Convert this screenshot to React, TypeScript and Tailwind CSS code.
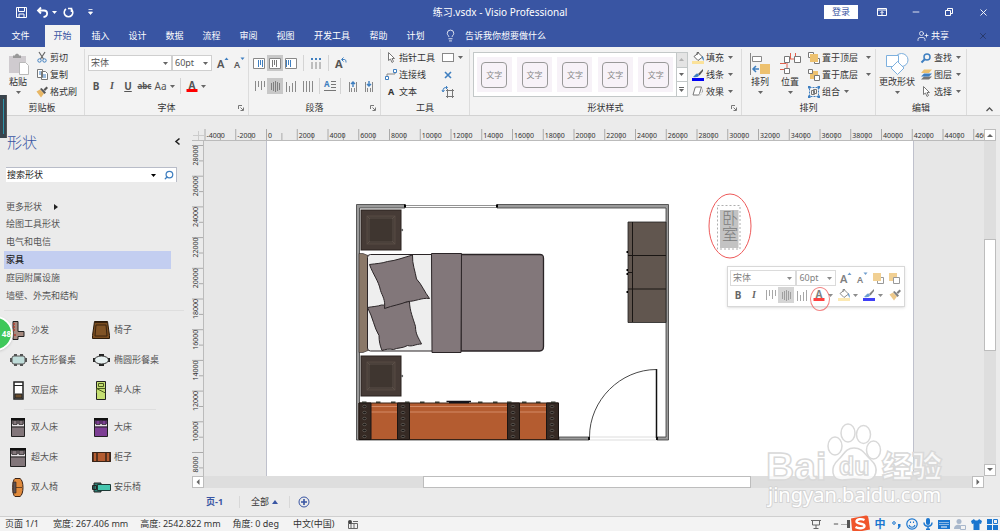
import React, { useState } from "react";
import clsx from "clsx";
import { Lightbulb, Minus, Search, UserPlus, X } from "lucide-react";

const TABS = ["插入", "设计", "数据", "流程", "审阅", "视图"];

const CATEGORIES = [
  "绘图工具形状",
  "电气和电信",
  "家具",
  "庭园附属设施",
  "墙壁、外壳和结构",
];

// --- Small helpers ---

const Svg = ({ w = 12, h = 12, box = "", children, className = "" }: any) => (
  <svg
    width={w}
    height={h}
    viewBox={box || `0 0 ${w} ${h}`}
    fill="none"
    className={clsx("shrink-0 overflow-visible", className)}
    aria-hidden="true"
  >
    {children}
  </svg>
);

const Caret = ({ className = "" }: { className?: string }) => (
  <Svg w={5} h={3} className={clsx("text-[#666]", className)}>
    <path d="M0 0h5L2.5 3z" fill="currentColor" />
  </Svg>
);

const Sep = () => <span className="mx-1 h-4 w-px shrink-0 bg-[#d4d4d4]" />;

const Group = ({ label, className, children, launcher }: any) => (
  <section
    className={clsx("relative flex shrink-0 flex-col border-r border-[#dcdcdc]", className)}
  >
    <div className="flex h-[51px] items-stretch">{children}</div>
    <h2 className="h-[15px] text-center leading-[16px]">{label}</h2>
    {launcher && (
      <button aria-label={label} className="absolute right-1 bottom-1">
        <Svg w={6} h={6}>
          <path d="M.5 4V.5H4M2.5 2.5 5 5M5.5 2.5v3h-3" stroke="#777" />
        </Svg>
      </button>
    )}
  </section>
);

const Tool = ({ icon, label, caret, wide }: any) => (
  <button className="flex h-[17px] items-center gap-[2px] whitespace-nowrap hover:bg-[#dde3f3]">
    <span className="flex w-3 justify-center">{icon}</span>
    {label}
    {caret && <Caret className={wide ? "ml-[6px]" : "ml-[2px]"} />}
  </button>
);

const BigTool = ({ icon, label, className }: any) => (
  <button
    className={clsx(
      "flex shrink-0 flex-col items-center whitespace-nowrap pt-[3px] hover:bg-[#dde3f3]",
      className
    )}
  >
    <span className="flex h-6 items-center">{icon}</span>
    <span className="leading-[12px]">{label}</span>
    <Caret className="mt-[3px]" />
  </button>
);

const IconBtn = ({ active, className = "w-4", label, children }: any) => (
  <button
    aria-label={label}
    className={clsx(
      "flex h-4 shrink-0 items-center justify-center gap-[3px]",
      className,
      active && "bg-[#c8c8c8]"
    )}
  >
    {children}
  </button>
);

const Picker = ({ label, value, className }: any) => (
  <label
    className={clsx(
      "relative flex h-4 items-center border border-[#cfcfcf] bg-white text-[#555]",
      className
    )}
  >
    <select
      aria-label={label}
      className="w-full appearance-none bg-transparent pl-[2px] text-[9px] outline-none"
    >
      <option>{value}</option>
    </select>
    <Caret className="pointer-events-none absolute right-[3px]" />
  </label>
);

// --- Glyphs shared by the ribbon and the floating toolbar ---

const FontUp = () => (
  <Svg w={13} h={12}>
    <text x="0" y="11" fontSize="11" fill="#555" fontWeight="600">A</text>
    <path d="M7.5 3 9.5.5l2 2.5z" fill="#3f7fc0" />
  </Svg>
);

const FontDown = () => (
  <Svg w={13} h={12}>
    <text x="1" y="11" fontSize="9" fill="#555" fontWeight="600">A</text>
    <path d="M7.5.5h4L9.5 3z" fill="#3f7fc0" />
  </Svg>
);

const FontColor = () => (
  <Svg w={12} h={12}>
    <text x="2.5" y="8.5" fontSize="10" fill="#555" fontWeight="700">A</text>
    <path d="M.5 9h11v3H.5z" fill="#f00" />
  </Svg>
);

const Bars = ({ kind = "mid" }: { kind?: string }) => (
  <Svg w={11} h={11}>
    {kind === "top" && <path d="M1.5 0v10M4.5 0v6M7.5 0v9M10.5 0v6" stroke="#8a8a8a" />}
    {kind === "mid" && <path d="M1.5 2v7M3.5 1v9M5.5 0v11M7.5 1v9M9.5 2v7" stroke="#808080" />}
    {kind === "bottom" && <path d="M.5 1v10M3.5 5v6M6.5 2v9M9.5 0v11" stroke="#8a8a8a" />}
    {kind === "full" && <path d="M1.5 0v11M4.5 0v11M7.5 0v11M10.5 0v11" stroke="#8a8a8a" />}
  </Svg>
);

const BarsBox = ({ at = 0 }: { at?: number }) => (
  <Svg w={12} h={11}>
    <path d="M.5.5h11v10H.5z" fill="#fff" stroke="#888" />
    <path
      d={`M${at + 1.5} 2v7M${at + 3.5} 2v5M${at + 5.5} 2v7`}
      stroke={at === 2 ? "#777" : "#3f7fc0"}
    />
  </Svg>
);

const Bucket = () => (
  <Svg w={12} h={12}>
    <path d="M2 4.5 6.5 1l4 4L6 8.5z" fill="#fff" stroke="#666" />
    <path d="M5 3V.5h2" stroke="#666" />
    <path d="M10 4c2 1 2 3 1.5 5L10 6z" fill="#3f7fc0" />
    <path d="M0 9h12v3H0z" fill="#fbe29a" />
  </Svg>
);

const LinePen = () => (
  <Svg w={12} h={12}>
    <path d="M11 0 6 5l1.5 1.5L11 2z" fill="#555" />
    <path d="M5.5 4.5c-2 0-2.5 2-4.5 3.5 3 .5 6 0 6-2z" fill="#3f7fc0" />
    <path d="M0 9h12v3H0z" fill="#0000f5" />
  </Svg>
);

const Brush = () => (
  <Svg w={12} h={12}>
    <path d="m.5 5.5 3.500-2 4 4L5 11.500z" fill="#e8b765" />
    <path d="m4 3 1.500-1 4.500 4.500-1.500 1.500z" fill="#555" />
    <path d="m7.500 3.500 3-3 1.500 1.500-3 3z" fill="#555" />
  </Svg>
);

const Pointer = () => (
  <Svg w={8} h={11}>
    <path d="M1.5.5v8l2-1.5L5 10.500l1.500-1L5 6.500h2.500z" fill="#fff" stroke="#777" />
  </Svg>
);

const Front = () => (
  <Svg w={12} h={12}>
    <path d="M.5.5h5v5h-5zM6.5 6.5h5v5h-5z" fill="#fff" stroke="#777" />
    <path d="M2 2h8v8H2z" fill="#edc16f" />
  </Svg>
);

const Back = () => (
  <Svg w={12} h={12}>
    <path d="M2 2h8v8H2z" fill="#edc16f" />
    <path d="M.5.5h4v4h-4zM6.5 6.5h5v5h-5z" fill="#fff" stroke="#777" />
  </Svg>
);

// --- Title bar and tabs ---

const TitleBar = () => (
  <header className="grid h-6 grid-cols-[1fr_auto_1fr] items-center bg-[#3955a3] text-white">
    <div className="flex items-center pl-4">
      <IconBtn label="保存" className="w-[11px]">
        <Svg w={11} h={11}>
          <path d="M.5.5h10v10H.5zM2.5.5v4h6v-4M3 10.500V7h5v3.500" stroke="#fff" />
        </Svg>
      </IconBtn>
      <IconBtn label="撤消" className="ml-2 w-6">
        <Svg w={12} h={11}>
          <path d="M4 .5 1 3.500l3 3M1.500 3.500H7c4 0 4.500 6-.5 6.500" stroke="#fff" strokeWidth="1.800" />
        </Svg>
        <Caret className="text-white" />
      </IconBtn>
      <IconBtn label="重复" className="ml-[3px] w-3">
        <Svg w={11} h={11}>
          <path d="M3 2a4.300 4.300 0 1 0 5 0M8.500 5V1.500H5" stroke="#fff" strokeWidth="1.600" />
        </Svg>
      </IconBtn>
      <IconBtn label="自定义" className="ml-2 w-4">
        <Svg w={5} h={6}>
          <path d="M.5.5h4M.5 3h4L2.500 5.500z" stroke="#fff" strokeWidth=".8" fill="#fff" />
        </Svg>
      </IconBtn>
    </div>
    <h1 className="text-[10px]">练习.vsdx - Visio Professional</h1>
    <div className="flex items-center justify-end">
      <button className="h-[14px] w-[34px] bg-white leading-[14px] text-[#3955a3]">登录</button>
      <IconBtn label="功能区" className="ml-[7px] w-[34px]">
        <Svg w={10} h={8}>
          <path d="M.5.5h9v7h-9zM.5 2h9M5 7V3.500M3.500 5 5 3.500 6.500 5" stroke="#fff" />
        </Svg>
      </IconBtn>
      <IconBtn label="最小化" className="w-[33px]">
        <Minus size={10} />
      </IconBtn>
      <IconBtn label="还原" className="w-[34px]">
        <Svg w={8} h={8}>
          <path d="M.5 2.500h5v5h-5zM2.500 2V.5h5v5H6" stroke="#fff" />
        </Svg>
      </IconBtn>
      <IconBtn label="关闭" className="w-[34px]">
        <X size={11} />
      </IconBtn>
    </div>
  </header>
);

const TabBar = () => (
  <nav className="flex h-[23px] items-stretch whitespace-nowrap bg-[#3955a3] text-white">
    <button className="w-[45px] pr-1">文件</button>
    <button className="mt-px mr-[2px] w-[35px] bg-[#f3f3f3] text-[#3955a3]">开始</button>
    {TABS.map((t) => (
      <button key={t} className="w-[37px]">
        {t}
      </button>
    ))}
    <button className="w-[56px]">开发工具</button>
    <button className="w-[37px]">帮助</button>
    <button className="w-[37px]">计划</button>
    <button className="ml-[10px] flex items-center gap-[8px]">
      <Lightbulb size={13} strokeWidth={1.5} />
      告诉我你想要做什么
    </button>
    <button className="ml-auto flex items-center gap-[2px]">
      <UserPlus size={12} strokeWidth={1.5} />
      共享
    </button>
    <button aria-label="关闭" className="ml-[17px] flex w-[34px] items-center justify-center text-[#27355f]">
      <X size={10} />
    </button>
  </nav>
);

// --- Ribbon ---

const Ribbon = () => (
  <div className="flex h-[69px] overflow-hidden border-b border-[#d2d2d2] bg-[#f3f3f3] pt-[2px]">
    <Group label="剪贴板" className="w-[85px]">
      <BigTool
        label="粘贴"
        className="mx-[5px] w-[26px]"
        icon={
          <Svg w={21} h={22}>
            <path d="M1 3h17v17H1z" fill="#cfcbcf" />
            <path d="M5 2.500h2C7 0 11 0 11 2.500h2V5H5z" fill="#999" />
            <path d="M11.500 9.500h6l3 3v9h-9z" fill="#fff" stroke="#b9b9b9" />
          </Svg>
        }
      />
      <div className="flex flex-col">
        <Tool
          label="剪切"
          icon={
            <Svg w={10} h={11}>
              <path d="m2 0 4.500 7M8 0 3.500 7" stroke="#666" strokeWidth="1.200" />
              <circle cx="2.500" cy="8.500" r="1.700" stroke="#3f7fc0" />
              <circle cx="7.500" cy="8.500" r="1.700" stroke="#3f7fc0" />
            </Svg>
          }
        />
        <Tool
          label="复制"
          icon={
            <Svg w={11} h={11}>
              <path d="M.5.5h5v8h-5zM4.500 2.500h4l2 2v6h-6z" fill="#fff" stroke="#777" />
              <path d="M2 3h2M2 5h2M6 6h3M6 8h3" stroke="#3f7fc0" />
            </Svg>
          }
        />
        <Tool label="格式刷" icon={<Brush />} />
      </div>
    </Group>

    <Group label="字体" className="w-[164px]" launcher>
      <div className="flex flex-col justify-center gap-[7px] pl-[3px]">
        <div className="flex items-center">
          <Picker label="字体" value="宋体" className="w-[84px]" />
          <Picker label="字号" value="60pt" className="w-[40px]" />
          <IconBtn label="增大字号" className="ml-[3px] w-4"><FontUp /></IconBtn>
          <IconBtn label="减小字号"><FontDown /></IconBtn>
        </div>
        <div className="flex items-center text-[10px] text-[#555]">
          <IconBtn><b>B</b></IconBtn>
          <IconBtn><i className="font-['Liberation_Serif',serif] font-bold">I</i></IconBtn>
          <IconBtn><b className="underline">U</b></IconBtn>
          <IconBtn className="w-[17px]"><s className="text-[8px] font-bold">abc</s></IconBtn>
          <IconBtn className="w-[23px]">Aa<Caret /></IconBtn>
          <Sep />
          <IconBtn label="字体颜色" className="w-[22px]"><FontColor /><Caret /></IconBtn>
        </div>
      </div>
    </Group>

    <Group label="段落" className="w-[132px]" launcher>
      <div className="flex flex-col justify-center gap-[7px] pl-[2px]">
        <div className="flex items-center">
          <IconBtn label="右对齐"><BarsBox at={4} /></IconBtn>
          <IconBtn label="居中" active><BarsBox at={2} /></IconBtn>
          <IconBtn label="左对齐"><BarsBox at={0} /></IconBtn>
          <Sep />
          <IconBtn label="项目符号">
            <Svg w={12} h={11}>
              <path d="M2 0v2M6 0v2M10 0v2" stroke="#3f7fc0" strokeWidth="2" />
              <path d="M2 4v7M6 4v7M10 4v7" stroke="#888" />
            </Svg>
          </IconBtn>
          <Sep />
          <IconBtn label="旋转文本">
            <Svg w={12} h={12}>
              <text x="0" y="11" fontSize="11" fontWeight="700" fill="#555">A</text>
              <path d="M7 2.500h2.500c1 0 1.500 1 1.500 3M8.500.5l-2 2 2 2" stroke="#3f7fc0" />
            </Svg>
          </IconBtn>
        </div>
        <div className="flex items-center">
          <IconBtn label="顶端对齐"><Bars kind="top" /></IconBtn>
          <IconBtn label="中部对齐" active><Bars /></IconBtn>
          <IconBtn label="底端对齐"><Bars kind="bottom" /></IconBtn>
          <IconBtn label="两端对齐"><Bars kind="full" /></IconBtn>
          <Sep />
          <IconBtn label="文字方向" className="w-3">
            <Svg w={12} h={12}>
              <text x="0" y="7" fontSize="8" fill="#3f7fc0" fontWeight="700">A</text>
              <path d="M7 1.500h5M7 4.500h5M7 7.500h5M0 10.500h12" stroke="#777" />
            </Svg>
          </IconBtn>
          <Sep />
          {["M6 7V2M4 4 6 2l2 2", "M6 1v5M4 4l2 2 2-2"].map((d) => (
            <IconBtn key={d} label="间距">
              <Svg w={10} h={12} box="1 0 10 12">
                <path d={d} stroke="#3f7fc0" strokeWidth="1.400" />
                <path d="M2.500 2v10M9.500 2v10M4.500 8v4M7.500 8v4" stroke="#888" />
              </Svg>
            </IconBtn>
          ))}
        </div>
      </div>
    </Group>

    <Group label="工具" className="w-[89px]">
      <div className="flex flex-col pl-1">
        <Tool label="指针工具" icon={<Pointer />} />
        <Tool
          label="连接线"
          icon={
            <Svg w={12} h={11}>
              <path d="M2 8V5h8V3" stroke="#888" />
              <path d="M.5 7.500h3v3h-3zM8.500.5h3v3h-3z" fill="#fff" stroke="#3f7fc0" />
            </Svg>
          }
        />
        <Tool label="文本" icon={<b>A</b>} />
      </div>
      <div className="ml-[7px] flex flex-col">
        <button aria-label="矩形" className="flex h-[17px] items-center gap-1">
          <span className="h-[9px] w-3 border border-[#888] bg-white" />
          <Caret />
        </button>
        <button aria-label="连接点" className="flex h-[17px] items-center pl-[2px]">
          <Svg w={8} h={8}><path d="m1 1 6 6M7 1 1 7" stroke="#3f7fc0" strokeWidth="1.600" /></Svg>
        </button>
        <button aria-label="文本块" className="flex h-[17px] items-center">
          <Svg w={12} h={12}>
            <path d="M5.500 4.500h5v6h-5zM4 4.500h8M4 10.500h8M5.500 3v9M10.500 3v9" stroke="#777" />
            <path d="M1 5c0-3 1-3.500 4-3.500M4 0l1.500 1.500L4 3M0 4l1 2 1.500-2" stroke="#3f7fc0" />
          </Svg>
        </button>
      </div>
    </Group>

    <Group label="形状样式" className="min-w-0 flex-1" launcher>
      <div className="my-[3px] ml-[3px] flex flex-1 border border-[#c3c8c8] bg-white">
        <div className="flex flex-1 items-center justify-around overflow-hidden">
          {[0, 1, 2, 3, 4].map((n) => (
            <button
              key={n}
              className="flex h-[35px] w-[35px] items-center justify-center bg-[#f7f2f8]"
            >
              <span className="flex size-[26px] items-center justify-center rounded-[4px] border border-[#999] text-[8px] text-[#888]">
                文字
              </span>
            </button>
          ))}
        </div>
        <div className="flex w-[11px] flex-col divide-y divide-[#c3c8c8] border-l border-[#c3c8c8] *:flex *:flex-1 *:items-center *:justify-center">
          <button aria-label="上一行" className="bg-[#e4e4e4]"><Caret className="rotate-180 opacity-40" /></button>
          <button aria-label="下一行"><Caret /></button>
          <button aria-label="其他" className="flex-col gap-px">
            <span className="h-px w-[5px] bg-[#666]" />
            <Caret />
          </button>
        </div>
      </div>
      <div className="mr-[8px] ml-1 flex flex-col">
        <Tool label="填充" icon={<Bucket />} caret />
        <Tool label="线条" icon={<LinePen />} caret />
        <Tool
          label="效果"
          caret
          icon={
            <Svg w={11} h={11}>
              <path d="M3 9.500h5l3-4V2L9 9z" fill="#999" />
              <path d="M3.500 1h6l-2 6.500c0 1-1 1.500-2 1.500H1L3 2z" fill="#fff" stroke="#777" />
            </Svg>
          }
        />
      </div>
    </Group>

    <Group label="排列" className="w-[134px]">
      <BigTool
        label="排列"
        className="ml-[3px] w-[30px]"
        icon={
          <Svg w={20} h={22}>
            <path d="M.5 0v22" stroke="#888" />
            <path d="M2.500 3.500h9v5h-9z" fill="#fff" stroke="#888" />
            <path d="M10 11h10v10H10z" fill="#edc16f" />
            <path d="M9 16H3M6 13l-3 3 3 3" stroke="#3f7fc0" strokeWidth="1.500" />
          </Svg>
        }
      />
      <BigTool
        label="位置"
        className="w-[30px]"
        icon={
          <Svg w={21} h={22}>
            <path d="M10.500 0v6M15.500 0v6M0 10.500h6M0 16.500h4M7 6v10M10 6h5" stroke="#e2604c" />
            <path d="M4.500 3.500h5v6h-5zM14.500 3.500h6v6h-6zM4.500 15.500h5v5h-5z" fill="#fff" stroke="#777" />
          </Svg>
        }
      />
      <div className="ml-[3px] flex flex-col">
        <Tool label="置于顶层" icon={<Front />} caret wide />
        <Tool label="置于底层" icon={<Back />} caret wide />
        <Tool
          label="组合"
          caret
          icon={
            <Svg w={12} h={12}>
              <path d="M1.500 1.500h9v9h-9z" stroke="#3f7fc0" strokeDasharray="2 1" />
              <path d="M0 0h2.500v2.500H0zM9.500 0H12v2.500H9.500zM0 9.500h2.500V12H0zM9.500 9.500H12V12H9.500z" fill="#3f7fc0" />
              <path d="M3.500 4.500h3v4h-3zM5.500 3.500h3v4h-3z" stroke="#777" />
            </Svg>
          }
        />
      </div>
    </Group>

    <Group label="编辑" className="w-[91px]">
      <BigTool
        label="更改形状"
        className="w-[42px]"
        icon={
          <Svg w={23} h={23}>
            <circle cx="15.500" cy="7" r="6.500" fill="#fff" stroke="#7db0de" />
            <path d="M.5 2.500h12v11H.5z" fill="#fff" stroke="#7db0de" />
            <path d="m11.500 8.500 6.500 6.500-6.500 6.500L5 15z" fill="#fff" stroke="#7db0de" />
          </Svg>
        }
      />
      <div className="ml-[2px] flex flex-col">
        <Tool
          label="查找"
          caret
          icon={
            <Svg w={10} h={10}>
              <circle cx="6" cy="4" r="3" stroke="#3f7fc0" strokeWidth="1.500" />
              <path d="M4 6 .5 9.500" stroke="#3f7fc0" strokeWidth="2" />
            </Svg>
          }
        />
        <Tool
          label="图层"
          caret
          icon={
            <Svg w={11} h={11}>
              <path d="M3 7.500h8l-3 3H0z" fill="#777" />
              <path d="M3 4.500h8l-3 3H0z" fill="#3f7fc0" />
              <path d="M3 .5h8L8 4H0z" fill="#edc16f" />
            </Svg>
          }
        />
        <Tool label="选择" icon={<Pointer />} caret />
      </div>
    </Group>

    <div className="flex w-[33px] shrink-0 items-end justify-end pr-[7px] pb-[3px]">
      <button aria-label="折叠功能区">
        <Svg w={7} h={5}><path d="M.5 4 3.500 1l3 3" stroke="#555" strokeWidth="1.300" /></Svg>
      </button>
    </div>
  </div>
);

// --- Stencil thumbnails ---

const DoubleBed = ({ fill = "#82767a", w = 14 }: any) => (
  <Svg w={w} h={19} box={`0 0 ${w} 19`}>
    <path d={`M.5.5h${w - 1}v18H.5z`} fill={fill} stroke="#222" />
    <path d={`M0 0h${w}v2.500H0z`} fill="#111" />
    <path d={`M1 6h${w - 2}v2.500H1z`} fill="#e8e4e6" />
    <path
      d={`M2 2.500h${w / 2 - 3}v4H2zM${w / 2 + 1} 2.500h${w / 2 - 3}v4h-${w / 2 - 3}z`}
      fill={fill}
      stroke="#222"
      strokeWidth=".7"
    />
    <path d={`M0 9h${w}`} stroke="#222" />
  </Svg>
);

const STENCILS: { label: string; icon: React.ReactNode }[][] = [
  [
    {
      label: "沙发",
      icon: (
        <Svg w={14} h={19}>
          <path d="M2 .5h5v10h6v5H7v3H2z" fill="#a5897e" stroke="#222" />
          <path d="M2 3h2M2 6h2M2 9h2M3 14h2" stroke="#b53c2c" strokeWidth="1.500" />
        </Svg>
      ),
    },
    {
      label: "椅子",
      icon: (
        <Svg w={18} h={18}>
          <path d="M2.500.5h13l2 14v3H.5v-3z" fill="#7a4d20" stroke="#2a1a0a" />
          <path d="M4 4h10l1 11H3zM3 1.500h12" fill="#805325" stroke="#3a240f" />
        </Svg>
      ),
    },
    {
      label: "长方形餐桌",
      icon: (
        <Svg w={17} h={12}>
          <path d="M4 1h3M10 1h3M4 11h3M10 11h3M1 4v4M16 4v4" stroke="#555" strokeWidth="2" />
          <rect x="2" y="2" width="13" height="8" rx="2" fill="#bfdcd9" stroke="#555" />
        </Svg>
      ),
    },
    {
      label: "椭圆形餐桌",
      icon: (
        <Svg w={17} h={12}>
          <path d="M6 1h5M6 11h5M1 4v4M16 4v4" stroke="#222" strokeWidth="2" />
          <ellipse cx="8.500" cy="6" rx="7" ry="4" fill="#e6f0f0" stroke="#333" />
        </Svg>
      ),
    },
    {
      label: "双层床",
      icon: (
        <Svg w={11} h={19}>
          <path d="M1 1h9v17H1z" fill="#fff" stroke="#222" strokeWidth="1.500" />
          <path d="M1 4.500h9" stroke="#222" />
          <path d="M2 13h7v4H2z" fill="#6b4e2e" stroke="#222" />
        </Svg>
      ),
    },
    {
      label: "单人床",
      icon: (
        <Svg w={10} h={19}>
          <path d="M.5.5h9v18h-9z" fill="#c5df72" stroke="#222" />
          <path d="M2.500 2.500h5v3h-5zM.5 7.500l9 4.500M.5 12V7.500h9" stroke="#4a5a20" />
        </Svg>
      ),
    },
  ],
  [
    { label: "双人床", icon: <DoubleBed /> },
    { label: "大床", icon: <DoubleBed fill="#7d3f94" /> },
    { label: "超大床", icon: <DoubleBed w={16} /> },
    {
      label: "柜子",
      icon: (
        <Svg w={19} h={11}>
          <path d="M.5.5h18v9H.5z" fill="#b45c30" stroke="#3a2418" />
          <path d="M1 0v10M5 0v10M14 0v10M18 0v10" stroke="#3a2418" strokeWidth="1.500" />
        </Svg>
      ),
    },
    {
      label: "双人椅",
      icon: (
        <Svg w={12} h={19}>
          <path d="M3 .5h5c4 2 4 16 0 18H3c-3-1-3-17 0-18z" fill="#e08a3c" stroke="#3a2418" />
          <path d="M1 4h3v11H1zM4 9.500h6" fill="#5c5254" stroke="#3a2418" strokeWidth=".7" />
        </Svg>
      ),
    },
    {
      label: "安乐椅",
      icon: (
        <Svg w={19} h={11}>
          <path d="M2 1h7v9H2zM.5 3.500h4v4h-4z" fill="#2b7f74" stroke="#222" />
          <path d="M5.500 2.500h13v6h-13z" fill="#45c5ae" stroke="#1c3a36" />
        </Svg>
      ),
    },
  ],
];

const ShapesPanel = () => {
  const [selected, setSelected] = useState("家具");
  return (
    <aside className="relative w-[192px] shrink-0 text-[#555]">
      <div className="flex h-[51px] items-start justify-between pt-[16px] pr-3 pl-[7px]">
        <h2 className="text-[15px] leading-[21px] font-light text-[#3955a3]">形状</h2>
        <button aria-label="折叠" className="mt-[6px]">
          <Svg w={5} h={7}><path d="M4.500.5 1 3.500l3.500 3" stroke="#222" strokeWidth="1.600" /></Svg>
        </button>
      </div>
      <form className="mr-[15px] ml-[6px] flex h-[15px] items-center border-t border-r border-[#b8bcc8] bg-white">
        <input
          aria-label="搜索形状"
          defaultValue="搜索形状"
          className="min-w-0 flex-1 bg-transparent pl-px text-[#222] outline-none"
        />
        <Caret className="mr-2 text-black" />
        <button type="button" aria-label="搜索" className="mr-[2px] text-[#3f7fc0]">
          <Search size={10} strokeWidth={3} className="-scale-x-100" />
        </button>
      </form>
      <ul className="mt-[17px] mr-[21px] ml-1 pb-[5px]">
        <li>
          <button className="flex h-4 items-center gap-3 pl-[2px]">
            更多形状
            <Svg w={4} h={6}><path d="M0 0v6l4-3z" fill="#222" /></Svg>
          </button>
        </li>
        {CATEGORIES.map((c) => (
          <li key={c}>
            <button
              onClick={() => setSelected(c)}
              className={clsx(
                "block h-[18px] w-full pl-[2px] text-left",
                c === selected && "bg-[#c3cef0] font-medium text-[#222]"
              )}
            >
              {c}
            </button>
          </li>
        ))}
      </ul>
      <div className="mr-2 ml-1 border-t border-[#dedede]" />
      {STENCILS.map((list, i) => (
        <div key={i}>
          {i > 0 && <div className="mt-1 mr-9 ml-6 border-t border-[#dedede]" />}
          <div className={clsx("mx-1 grid grid-cols-[83px_1fr]", i === 0 ? "mt-1" : "mt-[2px]")}>
            {list.map((s) => (
              <button key={s.label} className="flex h-[30px] items-center gap-[3px] whitespace-nowrap pl-1">
                <span className="flex w-5 justify-center">{s.icon}</span>
                {s.label}
              </button>
            ))}
          </div>
        </div>
      ))}
      <div className="absolute top-[200px] -left-[22px] flex size-[35px] items-center justify-end rounded-full border-2 border-white bg-[#3fc85a] text-[8px] font-bold text-white shadow">
        48
      </div>
    </aside>
  );
};

// --- Rulers ---

const TopRuler = () => (
  <svg width="100%" height="12" className="block bg-[#ebebeb]" aria-hidden="true">
    {Array.from({ length: 26 }, (_, i) => {
      const x = 1 + i * 30.75;
      return (
        <g key={i}>
          <path d={`M${x} 0v12M${x + 15.4} 4v8`} stroke="#aaa" />
          <text x={x + 1.5} y="8.500" fontSize="7" fill="#333">
            {(i - 2) * 2000}
          </text>
        </g>
      );
    })}
    <path d="M0 11.500h2000" stroke="#bbb" />
  </svg>
);

const SideRuler = () => (
  <svg width="12" height="100%" className="block bg-[#ebebeb]" aria-hidden="true">
    {Array.from({ length: 11 }, (_, i) => {
      const y = 4.5 + i * 30.7;
      return (
        <g key={i}>
          <path d={`M0 ${y}h12M7 ${y + 15.4}h5`} stroke="#aaa" />
          <text transform={`translate(6 ${y + 20}) rotate(-90)`} fontSize="7" fill="#333">
            {28000 - i * 2000}
          </text>
        </g>
      );
    })}
    <path d="M11.500 0v2000" stroke="#bbb" />
  </svg>
);

// --- Floor plan ---

const Nightstand = ({ y }: { y: number }) => (
  <g>
    <rect x="361" y={y} width="40" height="40" fill="#463b36" stroke="#2a221e" />
    <rect x="367" y={y + 6} width="28" height="28" fill="#4b413b" stroke="#564a43" />
    <rect x="370" y={y + 9} width="22" height="22" fill="#3f3630" />
    <path
      d={`M367 ${y + 6}l3 3M395 ${y + 6}l-3 3M367 ${y + 34}l3-3M395 ${y + 34}l-3-3`}
      stroke="#5b4f48"
    />
    <circle cx="402" cy={y + 20} r="1.200" fill="#666" />
  </g>
);

const FloorPlan = () => (
  <svg
    width="780"
    height="335"
    viewBox="204 141 780 335"
    className="block max-w-none"
    role="img"
    aria-label="卧室"
  >
    <path d="M267 141h646v335H267z" fill="#fff" />
    <path d="M266.500 141v335M913.500 141v335" stroke="#bfc1cc" />

    {/* walls */}
    <g fill="#9b9b9b" stroke="#3a3a3a" strokeWidth=".8">
      <path d="M356.500 204.500H405v3.500h-45.500v229H559v3H356.500z" />
      <path d="M497 204.500h171.500V440H657v-3h9V208H497zM559 437h30v3h-30z" />
    </g>
    <path d="M405 205.500h92M405 207.500h92" stroke="#777" strokeWidth=".8" />
    <path d="M404 204.500h2v3h-2zM496 204.500h2v3h-2z" fill="#000" />

    {/* door */}
    <path d="M589 437h68M589 440h68" stroke="#ddd" />
    <path d="M656.500 369v69" stroke="#111" strokeWidth="1.500" />
    <path d="M589.500 439v-2c0-37 31-67.500 67-67.500" stroke="#333" fill="none" strokeWidth=".9" />
    <path d="M588 437h2v3h-2zM656 437h2v3h-2z" fill="#111" />

    <Nightstand y={210} />
    <Nightstand y={356} />

    {/* bed */}
    <g stroke="#2b2527">
      <path d="M359 253.500h4l5 2v95l-5 2h-4z" fill="#8a7868" strokeWidth=".6" />
      <rect x="367.500" y="254.500" width="70" height="96.500" rx="3" fill="#eee" />
      <path d="M367.500 307.500c5-1 10-1 14-2.500 9 1 17-2 28-3.500 0 9 4 18 6 25 0 8 3 11 6 17.500-6 0-9 3-14 1.500-5 3-10 2-14 4-5-1-8 0-11.500 1-2-5-3-9-3-15-5-8-6-18-11.500-28z" fill="#82777a" />
      <path d="M369.500 264.500c7-1 12-1 18-3 9-1 16-4 25-6.500-.5 9 3 17 4 24 5 5 8 13 13 19.500-8-1-14 3-22 3-7 3-15 4-23 7 1-9-2-12-4-18-2-10-7-15-11-26z" fill="#82777a" />
      <path d="M461 254.500h79c3 0 3.500 1 3.500 4v88c0 3-1 4.500-4 4.500H461z" fill="#82777a" strokeWidth="1.300" />
      <path d="M431.500 253.500h30l-.5 99h-29z" fill="#82777a" />
    </g>

    {/* wardrobe */}
    <path d="M628 222h38v100.500h-38z" fill="#61564f" stroke="#222" strokeWidth=".8" />
    <path d="M632.500 222v100M628 255.500h38M628 289h38M628 272.500h4" stroke="#1a1614" />
    <path d="M626.500 251h1.500v2h-1.500zM626.500 269h1.500v2h-1.500zM626.500 273h1.500v2h-1.500zM626.500 291h1.500v2h-1.500z" fill="#000" />

    {/* trunk */}
    <path d="M359 403h199.500v36.500H359z" fill="#b45c30" stroke="#3a2418" />
    <path d="M360 406.500h198M360 412h198" stroke="#d38a66" />
    {[359, 397.5, 507.5, 546.5].map((x) => (
      <g key={x}>
        <path d={`M${x} 403h12v36.500h-12z`} fill="#362a24" stroke="#1c1512" />
        {[406.5, 412.5, 418.5, 424.5, 430.5, 436.5].map((y) => (
          <ellipse key={y} cx={x + 5.5} cy={y} rx="1.800" ry="1.200" fill="#1b1816" stroke="#77706a" strokeWidth=".6" />
        ))}
      </g>
    ))}
    {[362, 376, 391, 405, 420, 435, 478, 493, 507, 522, 536, 551].map((x) => (
      <path key={x} d={`M${x} 402.300h4.500`} stroke="#33352c" strokeWidth="1.600" />
    ))}
    <path d="M446.500 401.500h24.500M449 402.500h20" stroke="#14141c" strokeWidth="1.600" />

    {/* selected text block */}
    <path d="M717.500 205.500h22.500v43.500h-22.500z" stroke="#999" strokeDasharray="2 2" fill="none" strokeWidth=".8" />
    <path d="M720 210h18.500v38H720z" fill="#c3c3c3" />
    <text x="729" y="210" fontSize="16" fontWeight="300" fill="#7c7c7c" writingMode="vertical-rl">
      卧室
    </text>
    <ellipse cx="730" cy="226" rx="21" ry="32" stroke="#ee5a5a" fill="none" />
  </svg>
);

const MiniToolbar = () => (
  <div className="absolute top-[125px] left-[523px] w-[178px] border border-[#d8d8d8] bg-white px-[2px] pt-[2px] pb-[3px] shadow-sm *:opacity-75">
    <div className="flex items-center py-px">
      <Picker label="字体" value="宋体" className="w-[67px]" />
      <Picker label="字号" value="60pt" className="w-[40px]" />
      <IconBtn label="增大字号" className="ml-[2px] w-4"><FontUp /></IconBtn>
      <IconBtn label="减小字号" className="w-4"><FontDown /></IconBtn>
      <IconBtn label="置于顶层">
        <Svg w={11} h={11}>
          <path d="M4.500 4.500h6v6h-6z" fill="#fff" stroke="#777" />
          <path d="M0 0h8v8H0z" fill="#edc16f" />
        </Svg>
      </IconBtn>
      <IconBtn label="置于底层">
        <Svg w={11} h={11}>
          <path d="M0 0h8v8H0z" fill="#edc16f" />
          <path d="M4.500 4.500h6v6h-6z" fill="#fff" stroke="#777" />
        </Svg>
      </IconBtn>
    </div>
    <div className="flex items-center text-[10px]">
      <IconBtn><b>B</b></IconBtn>
      <IconBtn><i className="font-['Liberation_Serif',serif] font-bold">I</i></IconBtn>
      <IconBtn label="顶端对齐"><Bars kind="top" /></IconBtn>
      <IconBtn label="中部对齐" active><Bars /></IconBtn>
      <IconBtn label="底端对齐"><Bars kind="bottom" /></IconBtn>
      <IconBtn label="字体颜色" className="ml-[2px] w-[22px]"><FontColor /><Caret /></IconBtn>
      <IconBtn label="填充" className="ml-[3px] w-[22px]"><Bucket /><Caret /></IconBtn>
      <IconBtn label="线条" className="ml-[3px] w-[22px]"><LinePen /><Caret /></IconBtn>
      <IconBtn label="格式刷" className="ml-[3px] w-4"><Brush /></IconBtn>
    </div>
    <span className="absolute top-[20px] left-[82px] h-6 w-5 rounded-[50%] border border-[#ee5a5a]" />
  </div>
);

// --- Scroll bars ---

const Arrow = ({ d, label }: { d: string; label: string }) => (
  <button
    aria-label={label}
    className="flex size-3 shrink-0 items-center justify-center border border-[#bdbdbd] bg-white"
  >
    <Svg w={6} h={6}><path d={d} fill="#666" /></Svg>
  </button>
);

const Watermark = () => (
  <svg
    width="180"
    height="90"
    viewBox="766 421 180 90"
    className="pointer-events-none absolute right-[54px] bottom-[5px]"
    aria-hidden="true"
  >
    <g fill="#fff" fillOpacity=".8" stroke="#d9d9d9" strokeWidth="1.500">
      <text x="766" y="480" fontSize="39" fontWeight="700" fontFamily="Liberation Sans">Bai</text>
      <ellipse cx="835" cy="446" rx="7" ry="9" />
      <ellipse cx="848" cy="433" rx="7" ry="9" />
      <ellipse cx="863.500" cy="434.500" rx="7" ry="9" />
      <ellipse cx="873.500" cy="450" rx="7" ry="9" />
      <path d="M854 448c-9 0-10 7-15 11-10 9-7 21 3 21 5 0 7-1 12-1s8 1 13 1c9 0 13-12 4-20-6-5-8-12-17-12z" />
      <text x="839" y="475" fontSize="25" fontWeight="700" fontFamily="Liberation Sans">du</text>
      <text x="882" y="477" fontSize="30" fontWeight="900" fontFamily="Noto Sans CJK SC">经验</text>
    </g>
    <text x="768" y="502" fontSize="20" fill="#fff" stroke="#d4d4d4" strokeWidth="2" paintOrder="stroke" fontFamily="Noto Sans">
      jingyan.baidu.com
    </text>
  </svg>
);

const Workspace = () => (
  <main className="relative flex min-w-0 flex-1 flex-col pt-[13px] pr-1">
    <div className="grid min-h-0 flex-1 grid-cols-[12px_minmax(0,1fr)_12px] grid-rows-[12px_minmax(0,1fr)_12px]">
      <Svg><path d="M6.500 2v10M1 6.500h11" stroke="#ccc" /><path d="M0 11.500h12" stroke="#bbb" /></Svg>
      <TopRuler />
      <Arrow label="向上" d="M0 5h6L3 2z" />

      <div className="overflow-hidden"><SideRuler /></div>
      <div className="relative overflow-hidden bg-[#e7e7e7]">
        <FloorPlan />
        <MiniToolbar />
      </div>
      <div className="flex flex-col bg-[#dedede]">
        <div className="flex-[99]" />
        <div className="flex-[110] border border-[#bdbdbd] bg-white" />
        <div className="flex-[114]" />
        <Arrow label="向下" d="M0 1h6L3 4z" />
      </div>

      <Arrow label="向左" d="M4.500 0v6l-3-3z" />
      <div className="flex bg-[#dedede]">
        <div className="flex-[220]" />
        <div className="flex-[326] border border-[#bdbdbd] bg-white" />
        <div className="flex-[222]" />
        <Arrow label="向右" d="M1.500 0v6l3-3z" />
      </div>
      <span />
    </div>
    <div className="flex h-7 items-center pl-[14px]">
      <button className="font-bold text-[#3955a3]">页-1</button>
      <span className="mx-[11px] ml-4 h-3 w-px bg-[#d8d8d8]" />
      <button className="flex items-center gap-[3px]">
        全部
        <Svg w={6} h={4}><path d="M0 4h6L3 0z" fill="#3955a3" /></Svg>
      </button>
      <span className="mx-2 ml-[11px] h-3 w-px bg-[#d8d8d8]" />
      <button aria-label="新建页">
        <Svg w={12} h={12}>
          <circle cx="6" cy="6" r="5" stroke="#3955a3" />
          <path d="M6 3v6M3 6h6" stroke="#3955a3" strokeWidth="1.600" />
        </Svg>
      </button>
    </div>
    <Watermark />
  </main>
);

// --- Status bar ---

const StatusBar = () => (
  <footer className="flex h-[15px] items-center whitespace-nowrap border-t border-[#cfcfcf] bg-[#f3f3f3] pl-[5px]">
    <span>页面 1/1</span>
    <span className="ml-[14px]">宽度: 267.406 mm</span>
    <span className="ml-3">高度: 2542.822 mm</span>
    <span className="ml-3">角度: 0 deg</span>
    <span className="ml-[14px]">中文(中国)</span>
    <Svg w={10} h={9} className="ml-[14px]">
      <path d="M.5 3.500h9v5h-9zM3 3v5M6 3v5M5 1.500h5" stroke="#666" />
      <circle cx="2" cy="2" r="2" fill="#444" />
    </Svg>

    <div className="ml-auto flex items-center text-[#1b76cf]">
      <Svg w={10} h={9}>
        <path d="M0 .5h10M1.500 1v4h7V1M5 5v3M2.500 8.500h5" stroke="#666" />
      </Svg>
      <button aria-label="缩小" className="ml-3 flex w-[6px] text-[#555]"><Minus size={6} strokeWidth={4} /></button>
      <span className="ml-[2px] h-px w-[6px] bg-[#aaa]" />
      <span className="h-2 w-[3px] bg-[#555]" />
      <Svg w={20} h={18} className="relative z-10">
        <path d="M1 3.500 16 .5c2 0 2 1 2.500 3l1.500 11-16 3c-1 0-1.500-1-2-3z" fill="#f0552b" />
        <path d="M14.500 5c-3-1.500-8-1-8 1.500 0 3 8 1.500 8 4.500 0 2.500-6 3-9 1" stroke="#fff" strokeWidth="2.400" />
      </Svg>
      <div className="ml-[2px] flex items-center *:flex *:w-4 *:shrink-0 *:items-center *:justify-center">
        <b className="text-[11px] leading-[14px]">中</b>
        <span>
          <Svg w={9} h={9}>
            <circle cx="2" cy="3" r="1.300" stroke="currentColor" />
            <path d="M6 4h2.500v2.500L6.500 9h-1L6.500 6.500H6z" fill="currentColor" />
          </Svg>
        </span>
        <span>
          <Svg w={12} h={12}>
            <circle cx="6" cy="6" r="5.200" stroke="currentColor" strokeWidth="1.200" />
            <path d="M4.500 3.500v1.500M7.500 3.500v1.500M3 7c1 3 5 3 6 0" stroke="currentColor" strokeWidth="1.100" />
          </Svg>
        </span>
        <span>
          <Svg w={10} h={12}>
            <rect x="3" width="4" height="7" rx="2" fill="currentColor" />
            <path d="M1 4.500c0 5 8 5 8 0M5 8v3M3 11.200h4" stroke="currentColor" strokeWidth="1.400" />
          </Svg>
        </span>
        <span>
          <Svg w={12} h={9}>
            <path d="M0 0h12v9H0z" fill="currentColor" />
            <path d="M1.500 2.500h9M1.500 4.500h9" stroke="#fff" strokeDasharray="1 1" />
            <path d="M3 7h6" stroke="#fff" />
          </Svg>
        </span>
        <span className="text-[#a9b8cc]">
          <Svg w={12} h={11}>
            <circle cx="5" cy="2.500" r="2.500" fill="currentColor" />
            <path d="M0 10c0-5 6-5 7-3v3z" fill="currentColor" />
            <path d="M6.500 6.500h5v4h-5z" fill="#f3f3f3" stroke="currentColor" />
          </Svg>
        </span>
        <span>
          <Svg w={11} h={11}>
            <path d="m3 0-3 2 1 3 1.500-.5V11h6V4.500L10 5l1-3-3-2c-1 2-4 2-5 0z" fill="currentColor" />
          </Svg>
        </span>
        <span>
          <Svg w={11} h={11}>
            <path d="M0 0h5v5H0zM0 6h5v5H0zM6 6h5v5H6z" fill="currentColor" />
            <path d="M6.500.5h4v4h-4z" stroke="currentColor" />
          </Svg>
        </span>
      </div>
    </div>
  </footer>
);

const App = () => (
  <div className="relative flex h-screen flex-col overflow-hidden bg-[#ebebeb] font-['Noto_Sans','Noto_Sans_CJK_SC',sans-serif] text-[9px] leading-[14px] text-[#333]">
    <TitleBar />
    <TabBar />
    <Ribbon />
    <div className="flex min-h-0 flex-1">
      <ShapesPanel />
      <Workspace />
    </div>
    <StatusBar />
    <div className="absolute top-[95px] left-0 flex h-[43px] w-[7px] justify-center border-r border-[#555] bg-[#38434c] py-1">
      <span className="w-px bg-[#2d93a8]" />
    </div>
  </div>
);

export default App;
